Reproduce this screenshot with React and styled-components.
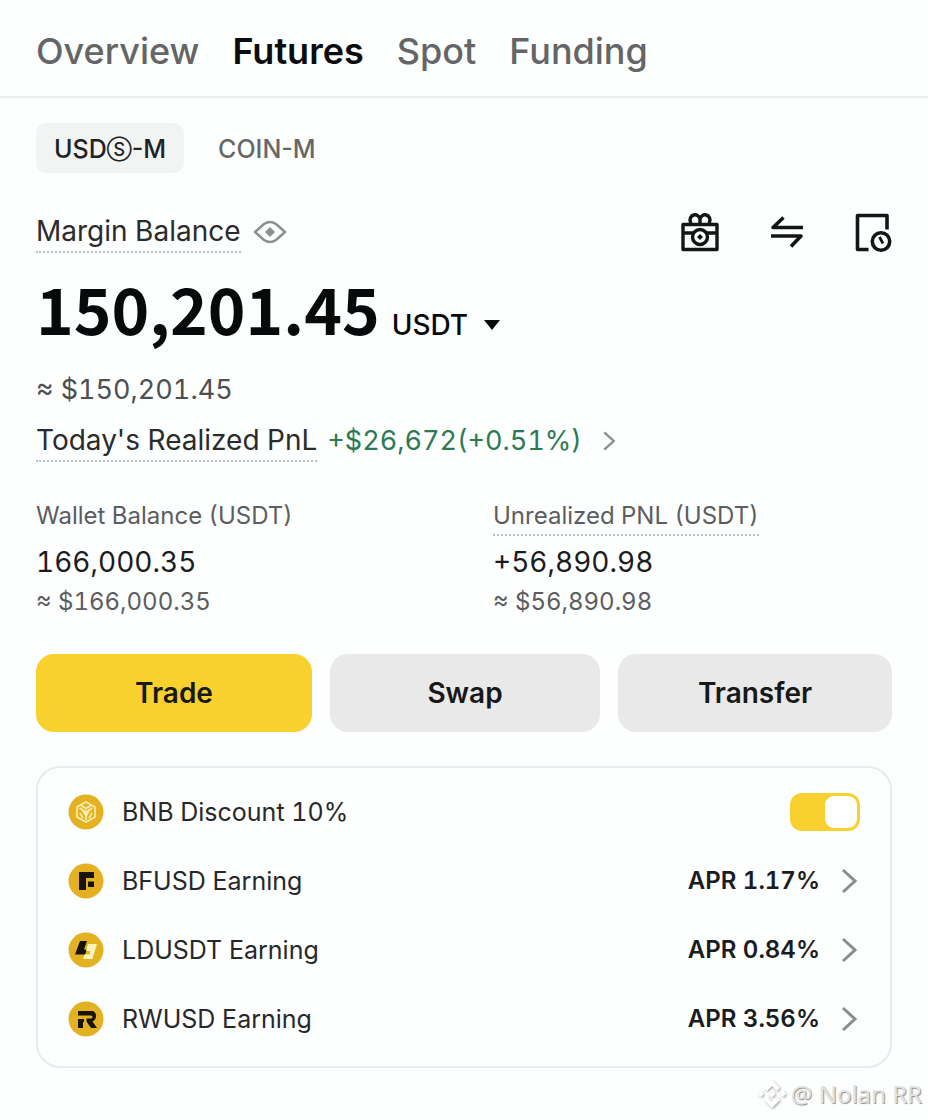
import { useState } from 'react';
import styled, { createGlobalStyle } from 'styled-components';

const GlobalStyle = createGlobalStyle`
  * {
    box-sizing: border-box;
  }
  body {
    margin: 0;
    background: #fdfefe;
    color: #202224;
    font-family: Inter, "Liberation Sans", sans-serif;
    font-variant-numeric: tabular-nums;
  }
  button, select, input {
    font-family: inherit;
    color: inherit;
    margin: 0;
  }
  a {
    color: inherit;
    text-decoration: none;
  }
`;

const Tabs = styled.nav`
  display: flex;
  gap: 33px;
  padding: 27px 36px 21px;
  border-bottom: 2px solid #eceeee;
`;
const Tab = styled.a`
  font-size: 36px;
  line-height: 48px;
  font-weight: ${({$active}) => $active ? 600 : 500};
  color: ${({$active}) => $active ? '#0b0c0e' : '#646566'};
`;
const Main = styled.main`
  padding: 25px 36px 0;
`;
const Pills = styled.div`
  display: flex;
  gap: 16px;
`;
const Pill = styled.button`
  border: 0;
  border-radius: 10px;
  padding: 2px 18px 0;
  height: 50px;
  font-size: 25px;
  font-weight: 500;
  color: ${({$active}) => $active ? '#202224' : '#666768'};
  background: ${({$active}) => $active ? '#f2f3f3' : 'transparent'};
`;
const Circled = styled.span`
  font-size: 18px;
  vertical-align: 2px;
`;
const Row = styled.div`
  display: flex;
  align-items: center;
`;
const BalanceHead = styled(Row)`
  justify-content: space-between;
  margin-top: 38px;
`;
const Hint = styled.span`
  font-size: ${({$small}) => $small ? '24px' : '28px'};
  line-height: ${({$small}) => $small ? '32px' : '40px'};
  color: ${({$small}) => $small ? '#5c5d5f' : '#2a2b2d'};
  border-bottom: 2px dotted #bcbdbe;
`;
const IconButton = styled.button`
  display: flex;
  padding: 0;
  border: 0;
  background: none;
`;
const Eye = styled(IconButton)`
  margin-left: 12px;
`;
const Actions = styled.div`
  display: flex;
  gap: 49px;
`;
const Balance = styled.div`
  display: flex;
  align-items: baseline;
  gap: 12px;
  margin-top: 14px;
  color: #08090a;
`;
const Amount = styled.strong`
  font-family: "Noto Sans CJK SC", Roboto, sans-serif;
  font-size: 64px;
  line-height: 80px;
  font-weight: 700;
`;
const Currency = styled.label`
  position: relative;
  svg {
    position: absolute;
    right: 0;
    top: 50%;
    margin-top: -6px;
    pointer-events: none;
  }
`;
const CurrencySelect = styled.select`
  appearance: none;
  border: 0;
  padding: 0 32px 0 0;
  background: none;
  font-size: 28px;
  line-height: 36px;
  font-weight: 500;
`;
const Approx = styled.div`
  margin-top: 25px;
  font-size: 27px;
  line-height: 36px;
  color: #4e4f51;
`;
const Pnl = styled(Row)`
  margin-top: 12px;
`;
const Gain = styled.a`
  display: flex;
  align-items: center;
  gap: 18px;
  margin-left: 10px;
  font-size: 27px;
  line-height: 40px;
  color: #2c7a54;
`;
const Stats = styled.div`
  display: grid;
  grid-template-columns: 1fr 1fr;
  column-gap: 58px;
  margin-top: 38px;
`;
const StatLabel = styled.div`
  display: flex;
  height: 36px;
  font-size: 24px;
  line-height: 32px;
  color: #5c5d5f;
`;
const StatValue = styled.div`
  margin-top: 6px;
  font-size: 28px;
  line-height: 40px;
  color: #1b1c1e;
`;
const StatApprox = styled.div`
  margin-top: 4px;
  font-size: 24px;
  line-height: 32px;
  color: #5c5d5f;
`;
const Buttons = styled.div`
  display: grid;
  grid-template-columns: 138fr 135fr 137fr;
  gap: 18px;
  margin-top: 36px;
`;
const Button = styled.button`
  height: 78px;
  border: 0;
  border-radius: 18px;
  font-size: 28px;
  font-weight: 600;
  color: #17181a;
  background: ${({$primary}) => $primary ? '#f8d12f' : '#e9e9e9'};
`;
const Card = styled.section`
  margin-top: 34px;
  padding: 9px 30px 13px;
  border: 2px solid #e9ebeb;
  border-radius: 24px;
`;
const Item = styled(Row)`
  height: 69px;
  gap: 18px;
  font-size: 25px;
  color: #27282a;
`;
const ItemName = styled.span`
  flex: 1;
`;
const Apr = styled.span`
  font-size: 24px;
  font-weight: 600;
  color: #1b1c1e;
`;
const Toggle = styled.input`
  appearance: none;
  width: 70px;
  height: 38px;
  border-radius: 12px;
  background: ${({checked}) => checked ? '#f8d12f' : '#d5d6d7'};
  &::before {
    content: '';
    display: block;
    width: 32px;
    height: 32px;
    margin: 3px;
    margin-left: ${({checked}) => checked ? '35px' : '3px'};
    border-radius: 9px;
    background: #fff;
  }
`;
const Footer = styled.footer`
  display: flex;
  justify-content: flex-end;
  align-items: center;
  gap: 4px;
  margin-top: 10px;
  padding-right: 6px;
  font-family: "Noto Sans", sans-serif;
  font-size: 24px;
  line-height: 32px;
  color: #e2e3e3;
  text-shadow: 1px 1px 1px #8c8d8d;
  svg {
    filter: drop-shadow(1px 1px 1px #a0a1a1);
  }
`;

const Chevron = ({width = 22, height = 28}) => (
  <svg width={width} height={height} viewBox="3 0 22 28" fill="none" stroke="#8b8c8d" strokeWidth="3">
    <path d="M8 3l12 11L8 25" />
  </svg>
);

const EyeIcon = () => (
  <svg width="34" height="24" viewBox="0 0 34 24" fill="none" stroke="#8e8f90" strokeWidth="2.6">
    <path d="M2 12L11 4Q17 0 23 4L32 12L23 20Q17 24 11 20z" strokeLinejoin="round" />
    <path d="M17 7l5 5-5 5-5-5z" fill="#8e8f90" stroke="none" />
  </svg>
);

const GiftIcon = () => (
  <svg width="40" height="40" viewBox="0 0 40 40" fill="none" stroke="#141517" strokeWidth="3.400" strokeLinejoin="round">
    <path d="M3 12.500h34v25H3zM3 21h10M27 21h10" />
    <path d="M20 12V7.500a5 5 0 1 0-9.500 2.500v2M20 12V7.500a5 5 0 1 1 9.500 2.500v2" />
    <circle cx="20" cy="25" r="7.500" />
    <path d="M20 22l3 3-3 3-3-3z" fill="#141517" stroke="none" />
  </svg>
);

const SwapIcon = () => (
  <svg width="36" height="40" viewBox="0 0 36 40" fill="none" stroke="#141517" strokeWidth="3.600" strokeLinejoin="round">
    <path d="M34 15.500H4L14.500 5.500M2 24h30L22 34.500" />
  </svg>
);

const HistoryIcon = () => (
  <svg width="38" height="40" viewBox="0 0 38 40" fill="none" stroke="#141517" strokeWidth="3.600">
    <path d="M14.500 37.500H3.500V3.500H33v14" strokeLinejoin="round" />
    <circle cx="27" cy="29.500" r="8.700" />
    <path d="M25.500 25l3.500 6.500" strokeWidth="2.800" />
  </svg>
);

const coinMarks = {
  bnb: (
    <g fill="none" stroke="#fbeeb0" strokeWidth="1.600">
      <path d="M18 8l9 5v10l-9 5-9-5V13z" />
      <path d="M11.500 14l6.500 4 6.500-4M18 18v8M13 11.500l5 3 5-3M12 19l3 5M24 19l-3 5" />
      <path d="M14.500 16l3.500 6 3.500-6-3.500 2z" fill="#fff6cf" />
    </g>
  ),
  bfusd: (
    <path d="M11 9h15v6h-8v12h-7zM20 18.500h6v5.500h-6z" fill="#17140a" />
  ),
  ldusdt: (
    <>
      <path d="M12 9h7l-3 8.500h3l-2 5H7z" fill="#17140a" />
      <path d="M20 12h9l-4.500 15H15l1.500-4.500h5l1-3.500h-4.500z" fill="#fff3b8" />
    </>
  ),
  rwusd: (
    <path d="M10 10h14c5 0 5.500 9 .5 10.500L29 27h-6l-4.500-6.500v-3H23c2 0 2-3 0-3H10zM10 18h6v3h-1v6h-5z" fill="#17140a" />
  ),
};

const Coin = ({type}) => (
  <svg width="36" height="36" viewBox="0 0 36 36">
    <circle cx="18" cy="18" r="17.500" fill="#e3b121" />
    {coinMarks[type]}
  </svg>
);

const earnings = [
  { type: 'bfusd', name: 'BFUSD Earning', apr: '1.17%' },
  { type: 'ldusdt', name: 'LDUSDT Earning', apr: '0.84%' },
  { type: 'rwusd', name: 'RWUSD Earning', apr: '3.56%' },
];

export default function App() {
  const [discount, setDiscount] = useState(true);

  return (
    <>
      <GlobalStyle />
      <Tabs>
        {['Overview', 'Futures', 'Spot', 'Funding'].map(tab => (
          <Tab key={tab} href="#" $active={tab === 'Futures'}>{tab}</Tab>
        ))}
      </Tabs>
      <Main>
        <Pills>
          <Pill $active>USD<Circled>Ⓢ</Circled>-M</Pill>
          <Pill>COIN-M</Pill>
        </Pills>
        <BalanceHead>
          <Row>
            <Hint>Margin Balance</Hint>
            <Eye aria-label="Hide balance"><EyeIcon /></Eye>
          </Row>
          <Actions>
            <IconButton aria-label="Rewards"><GiftIcon /></IconButton>
            <IconButton aria-label="Transfer"><SwapIcon /></IconButton>
            <IconButton aria-label="History"><HistoryIcon /></IconButton>
          </Actions>
        </BalanceHead>
        <Balance>
          <Amount>150,201.45</Amount>
          <Currency>
            <CurrencySelect aria-label="Currency">
              <option>USDT</option>
            </CurrencySelect>
            <svg width="18" height="12" viewBox="0 0 18 12">
              <path d="M1 1h16L9 11z" fill="#08090a" />
            </svg>
          </Currency>
        </Balance>
        <Approx>≈ $150,201.45</Approx>
        <Pnl>
          <Hint>Today's Realized PnL</Hint>
          <Gain href="#">+$26,672(+0.51%) <Chevron width={18} height={22} /></Gain>
        </Pnl>
        <Stats>
          <div>
            <StatLabel>Wallet Balance (USDT)</StatLabel>
            <StatValue>166,000.35</StatValue>
            <StatApprox>≈ $166,000.35</StatApprox>
          </div>
          <div>
            <StatLabel><Hint $small>Unrealized PNL (USDT)</Hint></StatLabel>
            <StatValue>+56,890.98</StatValue>
            <StatApprox>≈ $56,890.98</StatApprox>
          </div>
        </Stats>
        <Buttons>
          <Button $primary>Trade</Button>
          <Button>Swap</Button>
          <Button>Transfer</Button>
        </Buttons>
        <Card>
          <Item as="label">
            <Coin type="bnb" />
            <ItemName>BNB Discount 10%</ItemName>
            <Toggle type="checkbox" checked={discount} onChange={() => setDiscount(!discount)} />
          </Item>
          {earnings.map(({type, name, apr}) => (
            <Item as="a" href="#" key={type}>
              <Coin type={type} />
              <ItemName>{name}</ItemName>
              <Apr>APR {apr}</Apr>
              <Chevron />
            </Item>
          ))}
        </Card>
      </Main>
      <Footer>
        <svg width="30" height="30" viewBox="0 0 30 30" fill="#fff">
          <path d="M15 1l8 8-3 3-5-5-5 5-3-3zM15 29l8-8-3-3-5 5-5-5-3 3zM4 12l3 3-3 3-3-3zM26 12l3 3-3 3-3-3zM15 11.500l3.500 3.500-3.500 3.500-3.500-3.500z" />
        </svg>
        @ Nolan RR
      </Footer>
    </>
  );
}
